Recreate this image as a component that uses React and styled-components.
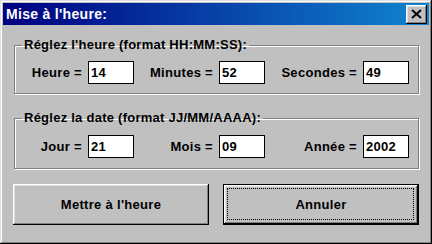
import React from 'react';
import styled, { createGlobalStyle } from 'styled-components';

const GlobalStyle = createGlobalStyle`
  html, body {
    margin: 0;
    padding: 0;
    background: #c0c0c0;
  }
  body {
    font-family: "Liberation Sans", Arial, sans-serif;
  }
`;

const Window = styled.div`
  box-sizing: border-box;
  width: 432px;
  height: 244px;
  padding: 3px;
  background: #c0c0c0;
  box-shadow: inset -1px -1px #000, inset 1px 1px #dfdfdf,
    inset -2px -2px #808080, inset 2px 2px #fff;
  display: flex;
  flex-direction: column;
`;

const TitleBar = styled.div`
  height: 22px;
  display: flex;
  align-items: center;
  justify-content: space-between;
  padding: 0 2px 0 3px;
  background: linear-gradient(to right, #000080, #1084d0);
`;

const Title = styled.span`
  color: #fff;
  font-weight: bold;
  font-size: 14px;
  letter-spacing: 0.3px;
`;

const CloseButton = styled.div`
  box-sizing: border-box;
  width: 21px;
  height: 19px;
  display: flex;
  align-items: center;
  justify-content: center;
  background: #c0c0c0;
  box-shadow: inset -1px -1px #000, inset 1px 1px #fff,
    inset -2px -2px #808080, inset 2px 2px #dfdfdf;
`;

const Body = styled.div`
  flex: 1;
  display: flex;
  flex-direction: column;
  padding: 13px 10px 0 10px;
`;

const Group = styled.fieldset`
  margin: ${(p) => p.$top}px 1px 0 1px;
  padding: ${(p) => p.$padTop}px 0 ${(p) => p.$padBottom}px 0;
  border: 1px solid #808080;
  box-shadow: 1px 1px 0 #fff, inset 1px 1px 0 #fff;
  width: 405px;
  box-sizing: border-box;
`;

const Legend = styled.legend`
  margin-left: 7px;
  padding: 0 2px;
  font-weight: bold;
  font-size: 13px;
  line-height: 14px;
  letter-spacing: 0.25px;
  color: #000;
`;

const Row = styled.div`
  display: grid;
  grid-template-columns: 119px 131px 144px;
`;

const Cell = styled.label`
  display: flex;
  align-items: center;
  justify-content: flex-end;
  gap: 6px;
  font-weight: bold;
  font-size: 13px;
  letter-spacing: 0.3px;
  color: #000;
`;

const Field = styled.div`
  box-sizing: border-box;
  width: 46px;
  height: 23px;
  background: #fff;
  border: 1px solid #000;
  padding: 0 0 0 2px;
  display: flex;
  align-items: center;
  font-weight: bold;
  font-size: 13px;
  letter-spacing: 0.3px;
`;

const Buttons = styled.div`
  display: flex;
  gap: 14px;
  margin-top: 15px;
`;

const Button = styled.div`
  box-sizing: border-box;
  width: 196px;
  height: 41px;
  display: flex;
  align-items: center;
  justify-content: center;
  font-weight: bold;
  font-size: 13px;
  letter-spacing: 0.3px;
  color: #000;
  position: relative;
  background: #c0c0c0;
  border: ${(p) => (p.$default ? '1px solid #000' : 'none')};
  box-shadow: inset -1px -1px #000, inset 1px 1px #fff,
    inset -2px -2px #808080, inset 2px 2px #dfdfdf;
`;

const Focus = styled.span`
  position: absolute;
  inset: 3px 4px 4px 3px;
  border: 1px dotted #000;
`;

export default function App() {
  return (
    <>
      <GlobalStyle />
      <Window>
        <TitleBar>
          <Title>Mise à l'heure:</Title>
          <CloseButton>
            <svg width="11" height="10" viewBox="0 0 11 10">
              <path d="M1 1 L10 9 M10 1 L1 9" stroke="#000" strokeWidth="2" />
            </svg>
          </CloseButton>
        </TitleBar>
        <Body>
          <Group $top={0} $padTop={9} $padBottom={9}>
            <Legend>Réglez l'heure (format HH:MM:SS):</Legend>
            <Row>
              <Cell>Heure = <Field>14</Field></Cell>
              <Cell>Minutes = <Field>52</Field></Cell>
              <Cell>Secondes = <Field>49</Field></Cell>
            </Row>
          </Group>
          <Group $top={17} $padTop={10} $padBottom={10}>
            <Legend>Réglez la date (format JJ/MM/AAAA):</Legend>
            <Row>
              <Cell>Jour = <Field>21</Field></Cell>
              <Cell>Mois = <Field>09</Field></Cell>
              <Cell>Année = <Field>2002</Field></Cell>
            </Row>
          </Group>
          <Buttons>
            <Button>Mettre à l'heure</Button>
            <Button $default>
              <Focus />
              Annuler
            </Button>
          </Buttons>
        </Body>
      </Window>
    </>
  );
}
